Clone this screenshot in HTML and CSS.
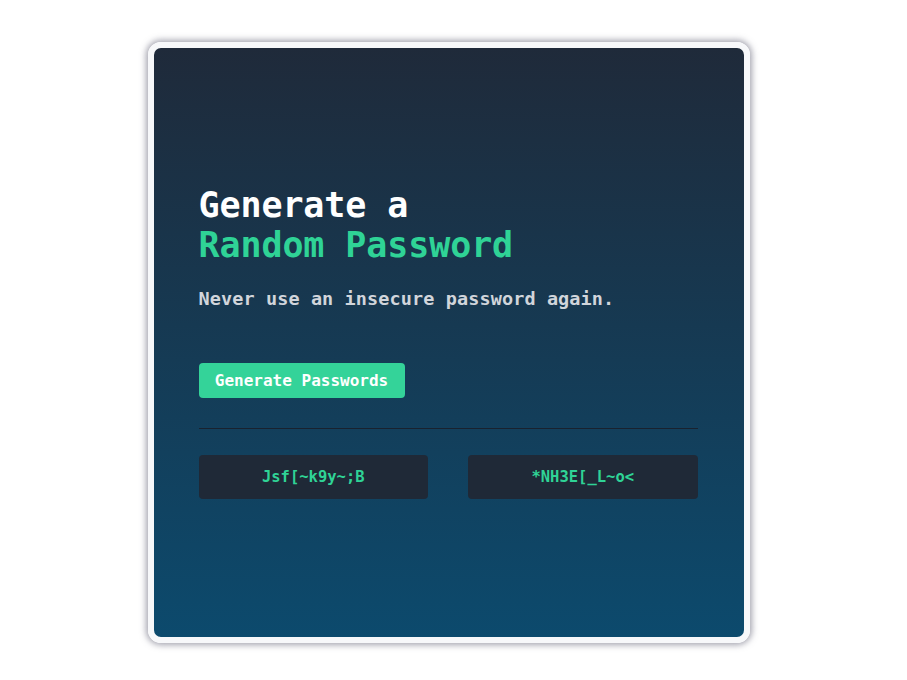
FILE: index.html
```html
<!DOCTYPE html>
<html>
<head>
<meta charset="utf-8">
<link rel="stylesheet" href="styles.css">
</head>
<body>
<div class="page">
  <div class="card">
    <div class="content">
      <h1 class="title">Generate a<br><span class="accent">Random Password</span></h1>
      <p class="subtitle">Never use an insecure password again.</p>
      <button class="btn">Generate Passwords</button>
      <hr class="divider">
      <div class="results">
        <div class="pw">Jsf[~k9y~;B</div>
        <div class="pw">*NH3E[_L~o&lt;</div>
      </div>
    </div>
  </div>
</div>
</body>
</html>
```
FILE: styles.css
```css
html, body {
  margin: 0;
  padding: 0;
  background: #ffffff;
}
body {
  font-family: "DejaVu Sans Mono", "Liberation Mono", monospace;
}
.page {
  width: 907px;
  height: 680px;
  display: flex;
  justify-content: center;
  padding: 42px 10px 0 0;
  box-sizing: border-box;
}
.card {
  width: 602px;
  height: 601px;
  box-sizing: border-box;
  border: 6px solid #f7f8fa;
  border-radius: 13px;
  box-shadow: 0 0 6px 2px rgba(90, 90, 110, 0.55);
  background: linear-gradient(180deg, #1f2a3a 0%, #0c4a6d 100%);
  display: flex;
  align-items: flex-start;
  padding: 137px 46px 0 45px;
}
.content {
  width: 100%;
}
.title {
  margin: 0;
  font-size: 35px;
  line-height: 40px;
  font-weight: bold;
  color: #ffffff;
  letter-spacing: -0.1px;
}
.accent {
  color: #2fd396;
}
.subtitle {
  margin: 22px 0 0;
  font-size: 18.5px;
  line-height: 24px;
  font-weight: bold;
  color: #d1d5db;
  letter-spacing: 0.1px;
}
.btn {
  display: block;
  margin-top: 52px;
  height: 35px;
  width: 206px;
  border: none;
  border-radius: 4px;
  background: #34d399;
  color: #ffffff;
  font-family: inherit;
  font-size: 16px;
  font-weight: bold;
  padding: 0;
}
.divider {
  margin: 30px 0 0;
  border: none;
  border-top: 1px solid #19222f;
  height: 0;
}
.results {
  margin-top: 26px;
  display: flex;
  gap: 40px;
}
.pw {
  flex: 1;
  height: 44px;
  border-radius: 4px;
  background: #1f2937;
  color: #2fd396;
  font-size: 15.5px;
  font-weight: bold;
  display: flex;
  align-items: center;
  justify-content: center;
}
```
